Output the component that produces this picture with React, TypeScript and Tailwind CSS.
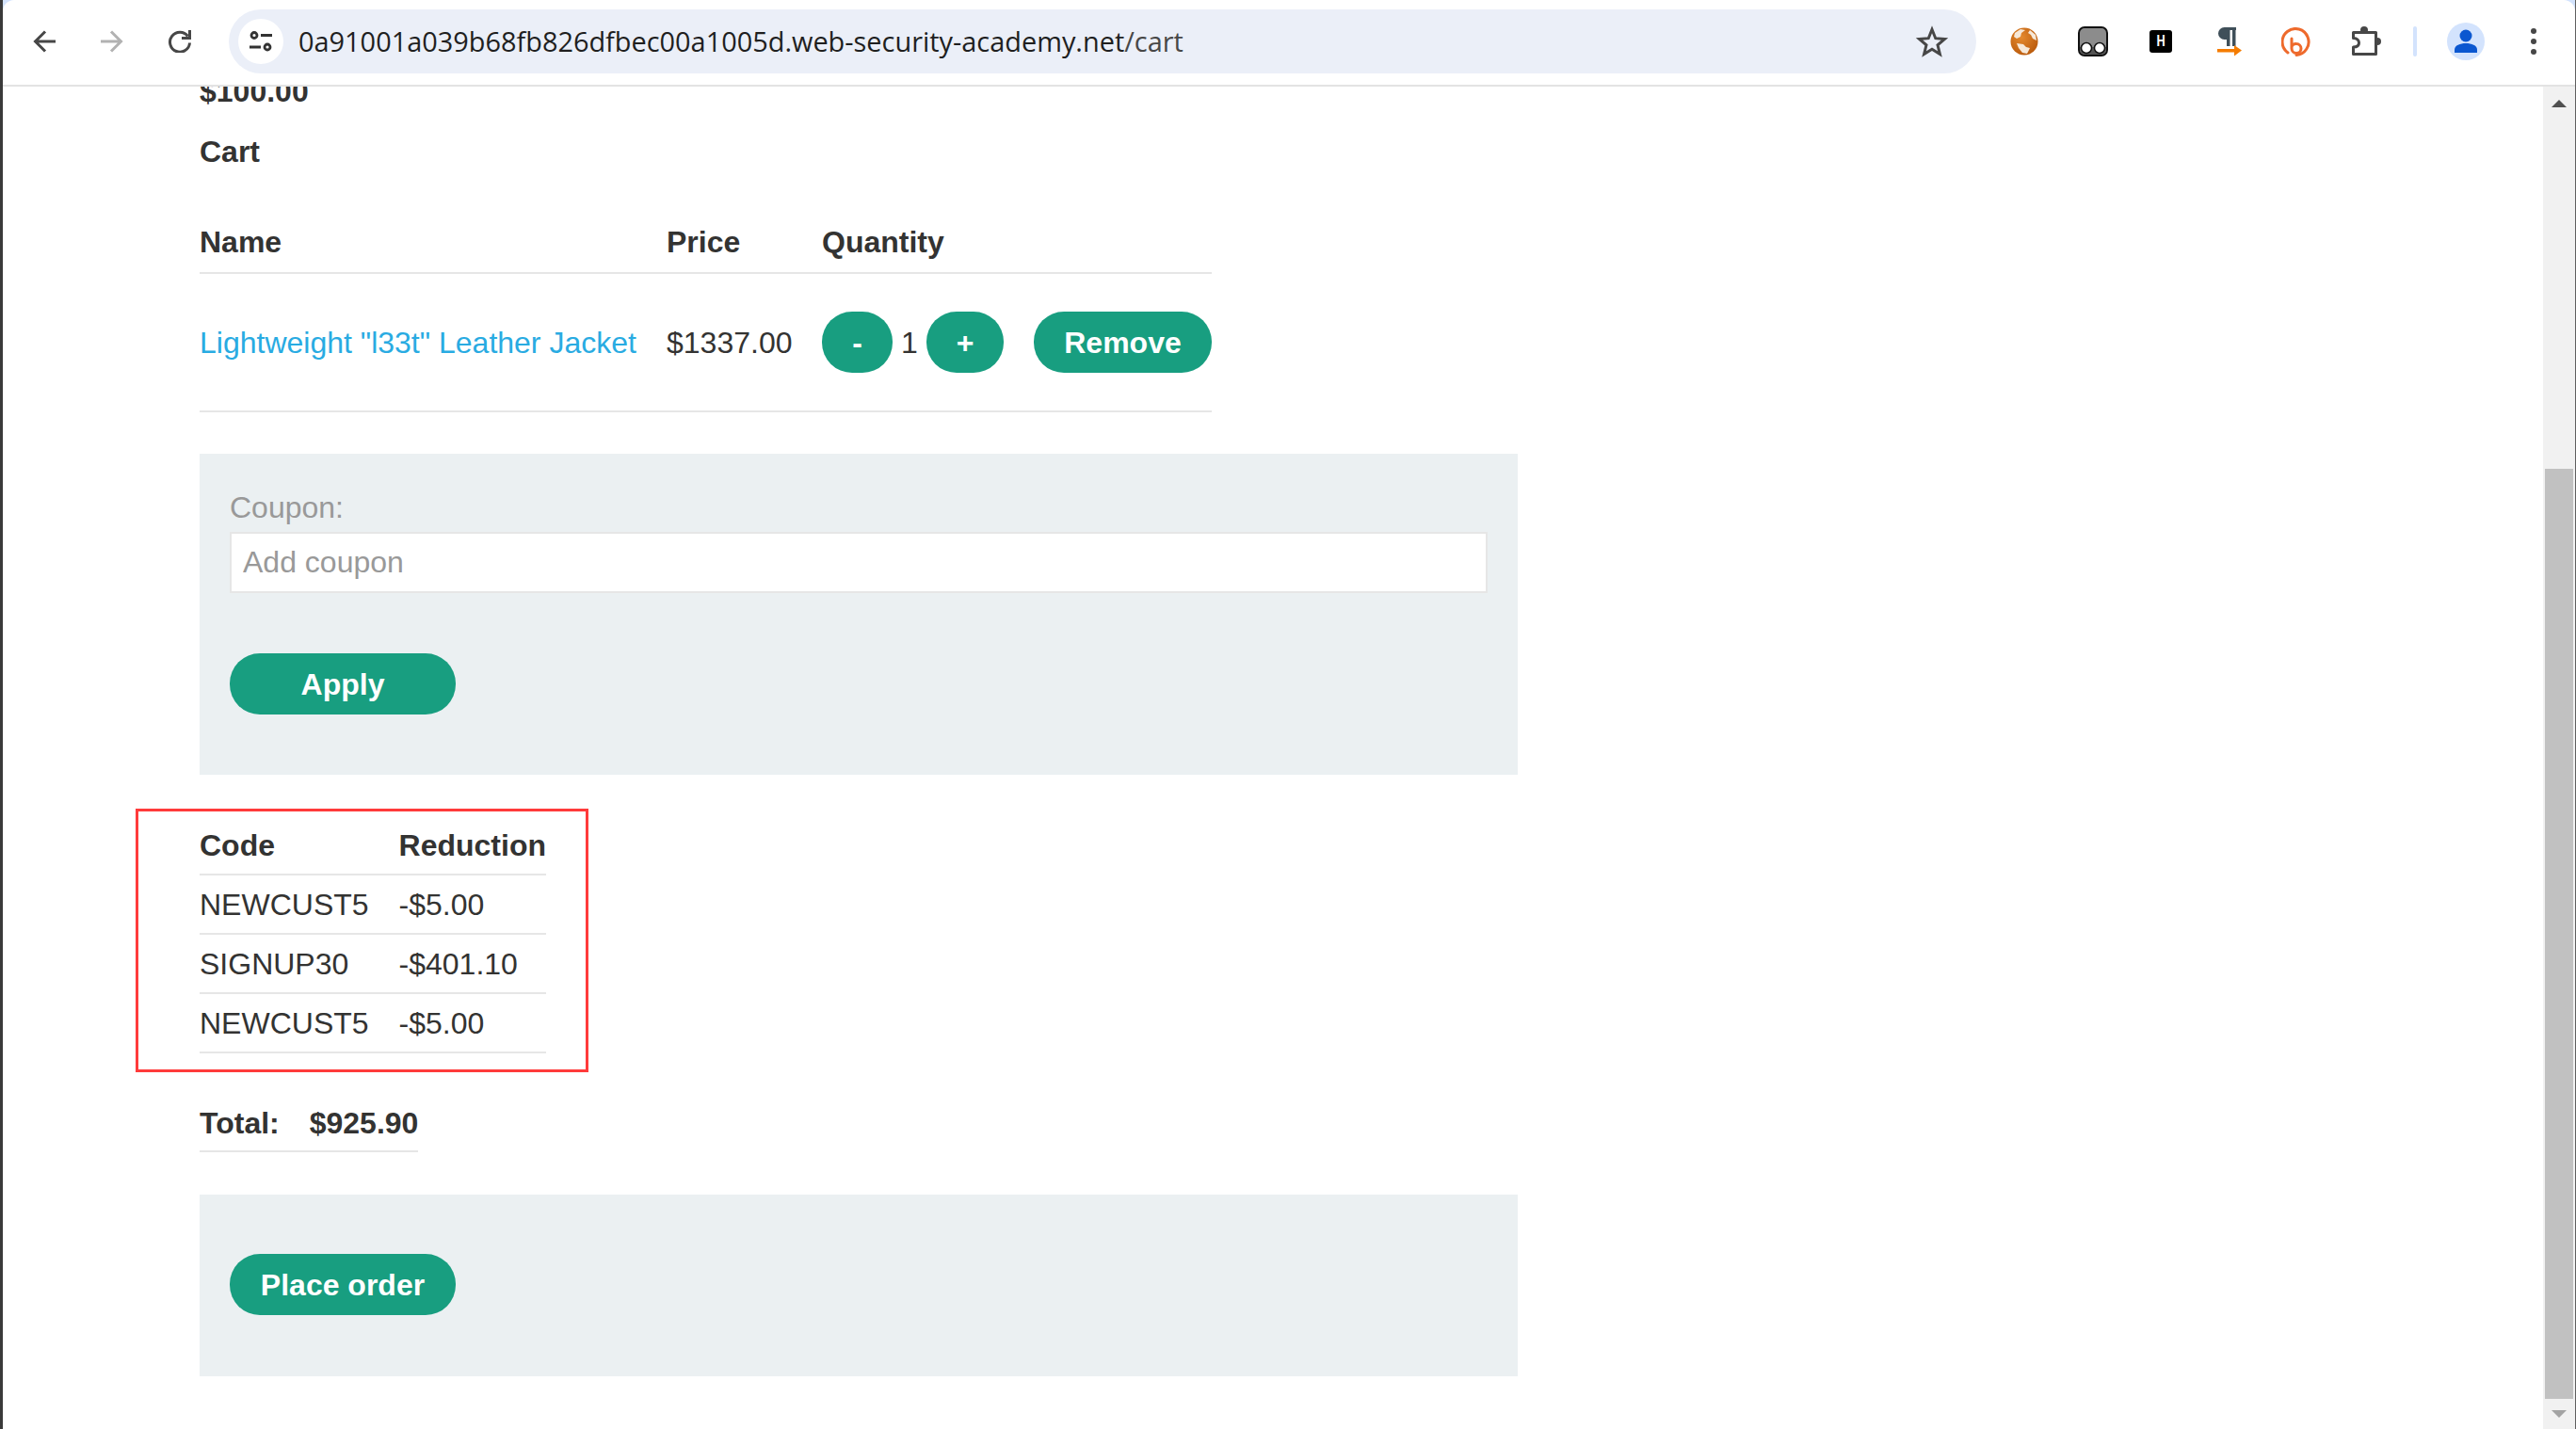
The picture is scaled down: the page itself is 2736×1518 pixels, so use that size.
import React from 'react';

const pageFont = "font-['Liberation_Sans',Arial,sans-serif]";
const greenButton = 'flex h-[65px] items-center justify-center rounded-[32px] bg-[#189e80] text-[32px] font-bold text-white';

function BackIcon() {
  return (
    <svg width="24" height="24" viewBox="0 0 24 24" fill="none" stroke="#474747" strokeWidth="3">
      <path d="M24 12H3M13 1.500 2.500 12 13 22.500" />
    </svg>
  );
}

function ForwardIcon() {
  return (
    <svg width="24" height="24" viewBox="0 0 24 24" fill="none" stroke="#b2b2b2" strokeWidth="3">
      <path d="M0 12h21M11 1.500 21.500 12 11 22.500" />
    </svg>
  );
}

function ReloadIcon() {
  return (
    <svg width="24" height="24" viewBox="0 0 24 24" fill="none" stroke="#474747" strokeWidth="3">
      <path d="M20.500 6.500A10.500 10.500 0 1 0 22.500 13.500" />
      <path d="M22.500 0v8.500H14" />
    </svg>
  );
}

function SiteInfoIcon() {
  return (
    <svg width="24" height="22" viewBox="0 0 24 22" fill="none" stroke="#333" strokeWidth="2.800">
      <circle cx="5" cy="4.500" r="3" />
      <path d="M12 4.500h12M0 17h12" />
      <circle cx="19" cy="17" r="3" />
    </svg>
  );
}

function StarIcon() {
  return (
    <svg width="36" height="36" viewBox="0 0 24 24" fill="none" stroke="#474747" strokeWidth="2">
      <polygon points="12,3.500 14.500,9.800 21,10.300 16,14.600 17.600,21 12,17.500 6.400,21 8,14.600 3,10.300 9.500,9.800" />
    </svg>
  );
}

function GlobeIcon() {
  return (
    <svg width="30" height="30" viewBox="0 0 30 30">
      <defs>
        <radialGradient id="globe" cx="0.4" cy="0.35" r="0.7">
          <stop offset="0" stopColor="#e58a2e" />
          <stop offset="1" stopColor="#b9590b" />
        </radialGradient>
      </defs>
      <circle cx="15" cy="15" r="14.500" fill="url(#globe)" />
      <path d="M5 6l6-4 5 1-4 3-1 4-4 2-3-2z M21 3l6 5 1 6-4-2-2-4-3-2z M7 17l7 1 3 3 4 1-3 6-5-1-4-5z" fill="#f6e8d8" />
    </svg>
  );
}

function GlassesIcon() {
  return (
    <svg width="32" height="32" viewBox="0 0 32 32">
      <rect x="1" y="1" width="30" height="30" rx="6" fill="#8c8c8c" stroke="#111" strokeWidth="2" />
      <path d="M2 22h28v3a5 5 0 0 1-5 5H7a5 5 0 0 1-5-5z" fill="#555" />
      <circle cx="9" cy="23" r="5.500" fill="#fff" stroke="#111" strokeWidth="1.500" />
      <circle cx="23" cy="23" r="5.500" fill="#fff" stroke="#111" strokeWidth="1.500" />
    </svg>
  );
}

function HackerIcon() {
  return (
    <div className={`flex h-6 w-6 items-center justify-center rounded-[3px] bg-black text-[17px] font-bold text-white ${pageFont}`}>
      <span className="scale-x-75">H</span>
    </div>
  );
}

function ParagraphIcon() {
  return (
    <svg width="26" height="31" viewBox="0 0 26 31">
      <path d="M20 0H7.500a6.500 6.500 0 0 0 0 13H10v7h3.500V3h2.500v17h3.500V3H20z" fill="#3f4f59" />
      <path d="M0 23h18v-4l8 5.500-8 6v-4H0z" fill="#f57c00" />
    </svg>
  );
}

function BitlyIcon() {
  return (
    <svg width="31" height="31" viewBox="0 0 31 31" fill="none" stroke="#ee6a2c" strokeWidth="3" strokeLinecap="round">
      <path d="M7 27A14 14 0 1 1 16 29.500" />
      <path d="M11 12v10.500a5 5 0 1 0 5-5 5 5 0 0 0-5 3" />
    </svg>
  );
}

function PuzzleIcon() {
  return (
    <svg width="32" height="32" viewBox="0 0 32 32" fill="#474747">
      <circle cx="14" cy="4" r="4" />
      <circle cx="28" cy="16" r="4" />
      <path d="M2.500 6.500H26.500V29.500H2.500V22C6.500 22 8.500 20 8.500 17.500 8.500 15 6.500 12.500 2.500 12.500Z" fill="#fff" stroke="#474747" strokeWidth="3" strokeLinejoin="round" />
    </svg>
  );
}

function AvatarIcon() {
  return (
    <svg width="40" height="40" viewBox="0 0 40 40">
      <circle cx="20" cy="20" r="20" fill="#d3e3fd" />
      <circle cx="20" cy="14" r="6.500" fill="#0b57d0" />
      <path d="M8 32v-3c0-5 6-7 12-7s12 2 12 7v3z" fill="#0b57d0" />
    </svg>
  );
}

function MenuIcon() {
  return (
    <svg width="6" height="28" viewBox="0 0 6 28" fill="#474747">
      <circle cx="3" cy="3" r="3" />
      <circle cx="3" cy="14" r="3" />
      <circle cx="3" cy="25" r="3" />
    </svg>
  );
}

function BrowserBar() {
  return (
    <div className="shrink-0 bg-[#d3e3fd]">
      <header className="flex h-[92px] items-center rounded-t-[12px] border-b-2 border-[#e3e3e3] bg-white pb-[2px]">
        <div className="flex w-[240px] shrink-0 items-center gap-[48px] pl-[32px]">
          <BackIcon />
          <ForwardIcon />
          <ReloadIcon />
        </div>
        <div className="flex h-[68px] w-[1856px] shrink-0 items-center rounded-[34px] bg-[#ebeff8] pl-[10px] pr-[29px]">
          <div className="flex h-12 w-12 items-center justify-center rounded-full bg-white">
            <SiteInfoIcon />
          </div>
          <span className="ml-[16px] font-['Open_Sans',sans-serif] text-[28.900px] text-[#1f1f1f]">
            0a91001a039b68fb826dfbec00a1005d.web-security-academy.net<span className="text-[#474747]">/cart</span>
          </span>
          <div className="ml-auto">
            <StarIcon />
          </div>
        </div>
        <div className="flex items-center">
          <div className="ml-[36px]"><GlobeIcon /></div>
          <div className="ml-[42px]"><GlassesIcon /></div>
          <div className="ml-[44px]"><HackerIcon /></div>
          <div className="ml-[48px]"><ParagraphIcon /></div>
          <div className="ml-[42px]"><BitlyIcon /></div>
          <div className="ml-[43px]"><PuzzleIcon /></div>
          <div className="ml-[34px] h-[32px] w-1 rounded-full bg-[#d3e3fd]" />
          <div className="ml-[32px]"><AvatarIcon /></div>
          <div className="ml-[49px]"><MenuIcon /></div>
        </div>
      </header>
    </div>
  );
}

function Scrollbar() {
  return (
    <div className="flex w-[34px] shrink-0 flex-col items-center bg-[#f1f1f1] px-[2px]">
      <div className="mt-[14px] h-0 w-0 border-x-8 border-b-8 border-x-transparent border-b-[#505050]" />
      <div className="mt-[384px] h-[988px] w-full bg-[#c1c1c1]" />
      <div className="mt-3 h-0 w-0 border-x-8 border-t-8 border-x-transparent border-t-[#a3a3a3]" />
    </div>
  );
}

function CartTable() {
  return (
    <table className="w-[1075px] border-collapse text-left text-[32px] text-[#333332]">
      <thead>
        <tr className="h-[66px] border-b-2 border-[#e6e6e6]">
          <th className="w-[496px] font-bold">Name</th>
          <th className="w-[165px] font-bold">Price</th>
          <th className="font-bold">Quantity</th>
        </tr>
      </thead>
      <tbody>
        <tr className="h-[147px] border-b-2 border-[#e6e6e6]">
          <td className="text-[#29abe2]">Lightweight "l33t" Leather Jacket</td>
          <td>$1337.00</td>
          <td>
            <div className="flex items-center">
              <button className={`${greenButton} w-[75px]`}>-</button>
              <span className="w-[36px] text-center">1</span>
              <button className={`${greenButton} w-[82px]`}>+</button>
              <button className={`${greenButton} ml-[32px] w-[189px]`}>Remove</button>
            </div>
          </td>
        </tr>
      </tbody>
    </table>
  );
}

function CouponPanel() {
  return (
    <section className="mt-[44px] h-[341px] w-[1400px] bg-[#ebf0f2] px-8 pt-[39px]">
      <label className="block h-[44px] text-[32px] leading-[37px] text-[#999]">Coupon:</label>
      <input
        className="block h-[65px] w-full border-2 border-[#e6e6e6] bg-white px-3 text-[32px] text-[#333332] placeholder:text-[#999] focus:outline-none"
        placeholder="Add coupon"
      />
      <button className={`${greenButton} mt-[64px] w-[240px]`}>Apply</button>
    </section>
  );
}

const reductions = [
  { code: 'NEWCUST5', amount: '-$5.00' },
  { code: 'SIGNUP30', amount: '-$401.10' },
  { code: 'NEWCUST5', amount: '-$5.00' },
];

function ReductionTable() {
  return (
    <div className="relative mt-[36px] w-[368px] pt-[12px] text-[32px] text-[#333332]">
      <table className="w-full border-collapse text-left">
        <thead>
          <tr className="h-[58px] border-b-2 border-[#e6e6e6]">
            <th className="w-[212px] pb-[4px] font-bold">Code</th>
            <th className="pb-[4px] font-bold">Reduction</th>
          </tr>
        </thead>
        <tbody>
          {reductions.map((row, i) => (
            <tr key={i} className="h-[63px] border-b-2 border-[#e6e6e6]">
              <td>{row.code}</td>
              <td>{row.amount}</td>
            </tr>
          ))}
        </tbody>
      </table>
      {/* red annotation drawn over the screenshot */}
      <div className="absolute -left-[68px] top-0 h-[280px] w-[481px] border-[3px] border-[#ff3b3b]" />
    </div>
  );
}

function App() {
  return (
    <div className={`flex h-screen w-full flex-col overflow-hidden border-r border-l-[3px] border-r-[#5f5f5f] border-l-[#3a3a3a] bg-white ${pageFont}`}>
      <BrowserBar />
      <div className="flex min-h-0 flex-1">
        <main className="min-w-0 flex-1 overflow-hidden pl-[209px]">
          <div className="-mt-[13px] text-[32px] font-bold leading-[37px] text-[#333332]">$100.00</div>
          <h2 className="mt-[27px] text-[32px] font-bold leading-[37px] text-[#333332]">Cart</h2>
          <div className="mt-[44px]">
            <CartTable />
          </div>
          <CouponPanel />
          <ReductionTable />
          <div className="mt-[56px] w-[232px] border-b-2 border-[#e6e6e6] pb-[10px] text-[32px] font-bold leading-[37px] text-[#333332]">
            <span>Total:</span>
            <span className="ml-[32px]">$925.90</span>
          </div>
          <section className="mt-[45px] h-[193px] w-[1400px] bg-[#ebf0f2] px-8 pt-[63px]">
            <button className={`${greenButton} w-[240px]`}>Place order</button>
          </section>
        </main>
        <Scrollbar />
      </div>
    </div>
  );
}

export default App;
